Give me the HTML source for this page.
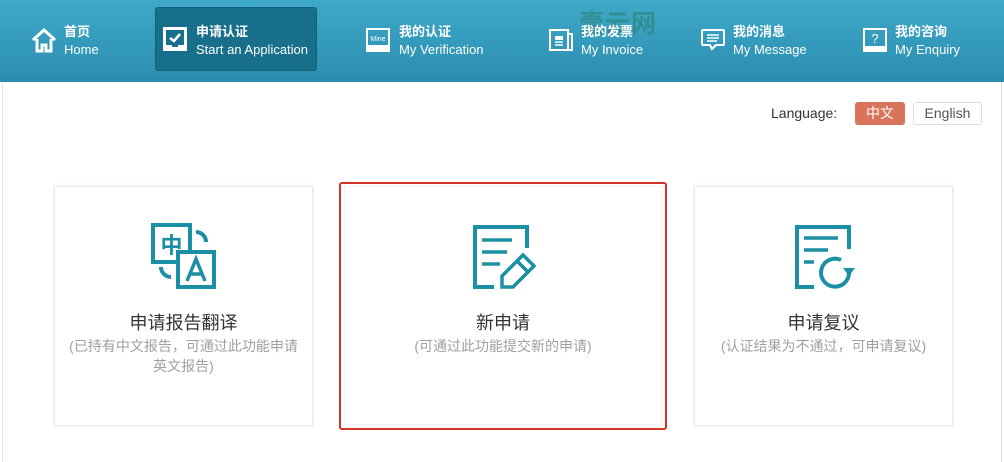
<!DOCTYPE html>
<html><head><meta charset="utf-8">
<style>
*{margin:0;padding:0;box-sizing:border-box}
body{width:1004px;height:462px;overflow:hidden;background:#fff;font-family:"Liberation Sans","Noto Sans CJK SC",sans-serif;position:relative}
.hdr{position:absolute;left:0;top:0;width:1004px;height:82px;background:linear-gradient(#3fa9c9,#2a8db0)}
.act{position:absolute;left:155px;top:7px;width:162px;height:64px;background:#176f8c;border:1px solid #11607a;border-radius:3px}
.nav{position:absolute;top:0;color:#fff}
.nav svg{position:absolute}
.nav .t1{position:absolute;font-size:13px;font-weight:bold;white-space:nowrap;top:21px}
.nav .t2{position:absolute;font-size:13px;white-space:nowrap;top:42px}
.lb{position:absolute;left:2px;top:82px;width:1px;height:380px;background:#e6e6e6}
.rb{position:absolute;left:1001px;top:82px;width:1px;height:380px;background:#ddd}
.card{position:absolute;background:#fff;border:1px solid #e8e8e8;box-shadow:0 0 4px rgba(0,0,0,.08);text-align:center}
.card h3{position:absolute;left:0;right:0;top:122px;font-size:18px;font-weight:normal;color:#333}
.card p{position:absolute;left:12px;right:12px;top:149px;font-size:14px;color:#a0a0a0;line-height:20px}
</style></head><body>
<div class="hdr"></div>
<div class="act"></div>
<div class="nav" style="left:0">
<svg style="left:31px;top:27px" width="26" height="26" viewBox="0 0 26 26"><path d="M2 13 L13 3 L24 13" fill="none" stroke="#fff" stroke-width="3"/><path d="M6 12 V24 H11 V18 H15 V24 H20 V12" fill="none" stroke="#fff" stroke-width="3"/></svg>
<div class="t1" style="left:64px">首页</div><div class="t2" style="left:64px">Home</div></div>
<div class="nav">
<svg style="left:163px;top:27px" width="24" height="24" viewBox="0 0 24 24"><rect x="1.5" y="1.5" width="21" height="21" fill="none" stroke="#fff" stroke-width="3"/><rect x="0" y="18" width="24" height="6" fill="#fff"/><rect x="9" y="17" width="6" height="3" fill="#176f8c"/><path d="M7 11 L11 14 L17 7" fill="none" stroke="#fff" stroke-width="2.5"/></svg>
<div class="t1" style="left:196px">申请认证</div><div class="t2" style="left:196px">Start an Application</div></div>
<div class="nav">
<svg style="left:366px;top:28px" width="24" height="24" viewBox="0 0 24 24"><rect x="1" y="1" width="22" height="22" fill="none" stroke="#fff" stroke-width="2"/><rect x="0" y="17" width="24" height="7" fill="#fff"/><text x="12" y="13" font-size="7" fill="#fff" text-anchor="middle" font-family="Liberation Sans">Mine</text></svg>
<div class="t1" style="left:399px">我的认证</div><div class="t2" style="left:399px">My Verification</div></div>
<div class="nav">
<svg style="left:549px;top:28px" width="24" height="24" viewBox="0 0 24 24"><rect x="1" y="2" width="18" height="20" fill="none" stroke="#fff" stroke-width="2"/><path d="M19 6 H23 V22 H19" fill="none" stroke="#fff" stroke-width="2"/><rect x="6" y="8" width="8" height="4" fill="#fff"/><path d="M6 14 H14 M6 17 H14" stroke="#fff" stroke-width="1.5"/></svg>
<div style="position:absolute;left:579px;top:4px;font-size:25px;font-weight:bold;color:rgba(40,120,90,.45);white-space:nowrap;letter-spacing:1px">壹云网</div>
<div class="t1" style="left:581px">我的发票</div><div class="t2" style="left:581px">My Invoice</div></div>
<div class="nav">
<svg style="left:700px;top:28px" width="26" height="24" viewBox="0 0 26 24"><path d="M3 2 H23 Q24 2 24 3 V16 Q24 17 23 17 H16 L12 21 L10 17 H3 Q2 17 2 16 V3 Q2 2 3 2Z" fill="none" stroke="#fff" stroke-width="2"/><path d="M7 7 H19 M7 10 H19 M7 13 H17" stroke="#fff" stroke-width="1.5"/></svg>
<div class="t1" style="left:733px">我的消息</div><div class="t2" style="left:733px">My Message</div></div>
<div class="nav">
<svg style="left:863px;top:28px" width="24" height="24" viewBox="0 0 24 24"><rect x="1" y="1" width="22" height="22" fill="none" stroke="#fff" stroke-width="2"/><rect x="0" y="18" width="24" height="6" fill="#fff"/><text x="12" y="15" font-size="13" fill="#fff" text-anchor="middle" font-family="Liberation Sans">?</text></svg>
<div class="t1" style="left:895px">我的咨询</div><div class="t2" style="left:895px">My Enquiry</div></div>

<div class="lb"></div><div class="rb"></div>

<div style="position:absolute;left:771px;top:105px;font-size:14px;color:#333">Language:</div>
<div style="position:absolute;left:855px;top:102px;width:50px;height:23px;background:#d9735a;border-radius:3px;color:#fff;font-size:14px;text-align:center;line-height:23px">中文</div>
<div style="position:absolute;left:913px;top:102px;width:69px;height:23px;border:1px solid #ddd;border-radius:3px;color:#555;font-size:14px;text-align:center;line-height:21px">English</div>

<div class="card" style="left:54px;top:186px;width:259px;height:240px">
<svg style="position:absolute;left:95px;top:35px" width="68" height="68" viewBox="0 0 68 68" fill="none" stroke="#1b8fa4"><path d="M46 10 A10 10 0 0 1 56 20" stroke-width="4"/><path d="M11 45 A10 10 0 0 0 21 55" stroke-width="4"/><rect x="3" y="3" width="37" height="37" fill="#fff" stroke-width="4"/><text x="21.5" y="31" font-size="22" font-weight="bold" fill="#1b8fa4" stroke="none" text-anchor="middle" font-family="Noto Sans CJK SC">中</text><rect x="28" y="30" width="36" height="35" fill="#fff" stroke-width="4"/><path d="M37 59 L46 37 L55 59 M40 52 H52" stroke-width="3.5"/></svg>
<h3>申请报告翻译</h3><p>(已持有中文报告，可通过此功能申请英文报告)</p></div>

<div style="position:absolute;left:339px;top:182px;width:328px;height:248px;border:2px solid #d33427;border-radius:3px"></div>
<div class="card" style="left:344px;top:186px;width:318px;height:239px;border-color:#f2f2f2;box-shadow:none">
<svg style="position:absolute;left:127px;top:37px" width="64" height="66" viewBox="0 0 64 66" fill="none" stroke="#1b8fa4" stroke-width="4"><path d="M22 63 H3 V3 H55 V24"/><path d="M10 16 H40 M10 28 H35 M10 40 H28" stroke-width="3.5"/><path d="M30 63 V52 L51 31 L62 42 L41 63Z M45 37 L56 48" stroke-width="3.5"/></svg>
<h3>新申请</h3><p>(可通过此功能提交新的申请)</p></div>

<div class="card" style="left:694px;top:186px;width:259px;height:240px">
<svg style="position:absolute;left:99px;top:37px" width="62" height="66" viewBox="0 0 62 66" fill="none" stroke="#1b8fa4" stroke-width="4"><path d="M20 63 H3 V3 H55 V25"/><path d="M10 14 H44 M10 26 H34 M10 38 H20" stroke-width="3.5"/><path d="M55 48 A14 14 0 1 1 47 36" stroke-width="4"/><path d="M49 44 L61 44 L55 52Z" fill="#1b8fa4" stroke="none"/></svg>
<h3>申请复议</h3><p>(认证结果为不通过，可申请复议)</p></div>
</body></html>
